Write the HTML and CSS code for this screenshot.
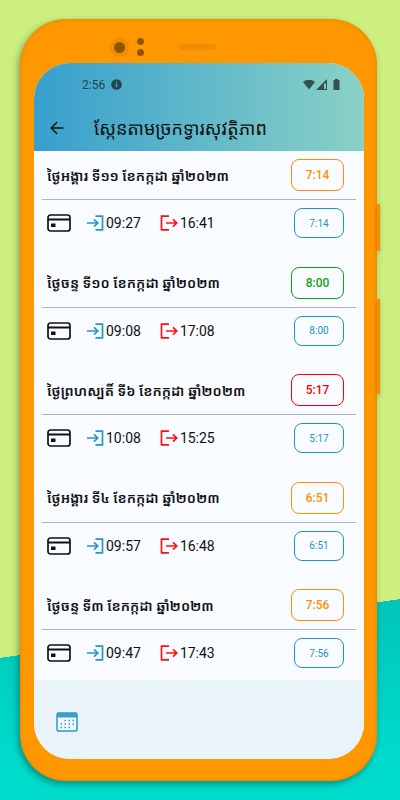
FILE: index.html
```
<!DOCTYPE html>
<html lang="km">

<head>
  <meta charset="utf-8">
  <meta name="viewport" content="width=device-width, initial-scale=1">
  <title>ស្កែនតាមច្រកទ្វារសុវត្ថិភាព</title>
  <link rel="stylesheet" href="styles.css">
</head>

<body>
  <!-- shared icons -->
  <svg class="icon-defs" aria-hidden="true">
    <symbol id="icon-card" viewBox="0 0 24 20">
      <rect x="1" y="2" width="22" height="16" rx="2.500" fill="none" stroke="#111" stroke-width="1.700" />
      <path d="M1 6.500h22" stroke="#111" stroke-width="2" />
      <rect x="4" y="10.500" width="4.500" height="3.500" rx="0.500" fill="#111" />
    </symbol>
    <symbol id="icon-in" viewBox="0 0 18 16">
      <path d="M9.500 1.200h7v13.600h-7M1 8h11M8 4.300L11.800 8L8 11.700" fill="none" stroke="currentColor" stroke-width="1.700" />
    </symbol>
    <symbol id="icon-out" viewBox="0 0 18 16">
      <path d="M9 1.200H1.500v13.600H9M6 8h11M13 4.300L16.800 8L13 11.700" fill="none" stroke="currentColor" stroke-width="1.700" />
    </symbol>
  </svg>

  <div class="phone">
    <div class="side-button power"></div>
    <div class="side-button volume"></div>
    <div class="phone-top">
      <span class="camera"></span>
      <span class="sensors"><i></i><i></i></span>
      <span class="speaker"></span>
    </div>

    <div class="screen">
      <header class="header">
        <div class="status-bar">
          <span>2:56</span>
          <svg width="11" height="11" viewBox="0 0 11 11" aria-hidden="true">
            <circle cx="5.500" cy="5.500" r="5.300" fill="#24424f" />
            <path d="M5.500 4.800v3.500M5.500 2.500v1.300" stroke="#57aeca" stroke-width="1.300" />
          </svg>
          <svg class="status-right" width="38" height="12" viewBox="0 0 38 12" fill="#34504f" aria-hidden="true">
            <path d="M0 3C3.500 0 8.500 0 12 3L6 10.500z" />
            <path d="M24 0v11H13z" />
            <path d="M21 4.500h2V10h-2z" fill="#83cbc5" />
            <path d="M30.500 1h1.500V0h3v1h1.500v10h-6z" />
          </svg>
        </div>
        <div class="title-bar">
          <button type="button" class="back" aria-label="Back">
            <svg width="14" height="14" viewBox="0 0 14 14" aria-hidden="true">
              <path d="M13.500 7H1.500M7.200 1L1.200 7l6 6" fill="none" stroke="#111" stroke-width="1.500" />
            </svg>
          </button>
          <h1>ស្កែនតាមច្រកទ្វារសុវត្ថិភាព</h1>
        </div>
      </header>

      <main class="list">
        <section class="day">
          <div class="day-head">
            <h2>ថ្ងៃអង្គារ ទី១១ ខែកក្កដា ឆ្នាំ២០២៣</h2>
            <span class="total orange">7:14</span>
          </div>
          <div class="day-row">
            <svg class="card"><use href="#icon-card" /></svg>
            <span class="time in"><svg><use href="#icon-in" /></svg>09:27</span>
            <span class="time out"><svg><use href="#icon-out" /></svg>16:41</span>
            <span class="hours">7:14</span>
          </div>
        </section>

        <section class="day">
          <div class="day-head">
            <h2>ថ្ងៃចន្ទ ទី១០ ខែកក្កដា ឆ្នាំ២០២៣</h2>
            <span class="total green">8:00</span>
          </div>
          <div class="day-row">
            <svg class="card"><use href="#icon-card" /></svg>
            <span class="time in"><svg><use href="#icon-in" /></svg>09:08</span>
            <span class="time out"><svg><use href="#icon-out" /></svg>17:08</span>
            <span class="hours">8:00</span>
          </div>
        </section>

        <section class="day">
          <div class="day-head">
            <h2>ថ្ងៃព្រហស្បតិ៍ ទី៦ ខែកក្កដា ឆ្នាំ២០២៣</h2>
            <span class="total red">5:17</span>
          </div>
          <div class="day-row">
            <svg class="card"><use href="#icon-card" /></svg>
            <span class="time in"><svg><use href="#icon-in" /></svg>10:08</span>
            <span class="time out"><svg><use href="#icon-out" /></svg>15:25</span>
            <span class="hours">5:17</span>
          </div>
        </section>

        <section class="day">
          <div class="day-head">
            <h2>ថ្ងៃអង្គារ ទី៤ ខែកក្កដា ឆ្នាំ២០២៣</h2>
            <span class="total orange">6:51</span>
          </div>
          <div class="day-row">
            <svg class="card"><use href="#icon-card" /></svg>
            <span class="time in"><svg><use href="#icon-in" /></svg>09:57</span>
            <span class="time out"><svg><use href="#icon-out" /></svg>16:48</span>
            <span class="hours">6:51</span>
          </div>
        </section>

        <section class="day">
          <div class="day-head">
            <h2>ថ្ងៃចន្ទ ទី៣ ខែកក្កដា ឆ្នាំ២០២៣</h2>
            <span class="total orange">7:56</span>
          </div>
          <div class="day-row">
            <svg class="card"><use href="#icon-card" /></svg>
            <span class="time in"><svg><use href="#icon-in" /></svg>09:47</span>
            <span class="time out"><svg><use href="#icon-out" /></svg>17:43</span>
            <span class="hours">7:56</span>
          </div>
        </section>
      </main>

      <footer class="footer">
        <button type="button" class="calendar" aria-label="Calendar">
          <svg width="22" height="20" viewBox="0 0 22 20" aria-hidden="true">
            <rect x="1" y="1" width="20" height="18" rx="1.500" fill="#f2f9fc" stroke="#2b97c4" stroke-width="1.500" />
            <path d="M1 1h20v4.500H1z" fill="#3a9fcc" />
            <path d="M8.500 8.500h10M4.500 12h14M4.500 15.500h10" stroke="#2b97c4" stroke-width="1.500" stroke-dasharray="1.500 2.500" />
          </svg>
        </button>
      </footer>
    </div>
  </div>
</body>

</html>
```

FILE: styles.css
```
* {
  box-sizing: border-box;
}

body {
  margin: 0;
  min-height: 100vh;
  padding: 19px 23px 19px 20px;
  display: flex;
  font-family: Roboto, "Noto Sans Khmer", "Khmer OS", sans-serif;
  color: #111;
  background: linear-gradient(to bottom right, #cdef80 50%, transparent 50%) 0 599px / 100% 59px no-repeat,
    linear-gradient(#cdef80, #cdef80) 0 0 / 100% 599px no-repeat,
    linear-gradient(#00c4b8 600px, #00dccc 760px);
}

.icon-defs {
  position: absolute;
  width: 0;
  height: 0;
}

.phone {
  position: relative;
  flex: 1;
  display: flex;
  flex-direction: column;
  padding: 0 13px 22px 14px;
  border-radius: 46px;
  background: #ff9800;
  box-shadow: -2px 3px 7px rgba(0, 0, 0, 0.35), inset 0 0 4px rgba(150, 80, 0, 0.3);
}

.side-button {
  position: absolute;
  left: 100%;
  width: 3px;
  background: #f88f00;
  box-shadow: 0 2px 4px rgba(0, 0, 0, 0.2);
}

.power {
  top: 185px;
  height: 47px;
}

.volume {
  top: 280px;
  height: 95px;
}

.phone-top {
  height: 44px;
  padding: 12px 0 0 76px;
  display: flex;
  align-items: center;
}

.camera {
  width: 19px;
  height: 19px;
  border: 4px solid #ee8e05;
  border-radius: 50%;
  background: #8f5500;
}

.sensors {
  display: grid;
  gap: 4px;
  margin-left: 8px;
}

.sensors i {
  width: 7px;
  height: 7px;
  border-radius: 50%;
  background: #8f5500;
}

.speaker {
  width: 37px;
  height: 6px;
  margin-left: 35px;
  border-radius: 3px;
  background: #ee8e05;
}

.screen {
  flex: 1;
  display: flex;
  flex-direction: column;
  overflow: hidden;
  border-radius: 36px;
  background: #f8fbff;
}

.header {
  height: 88px;
  background: linear-gradient(to right, #379fcd, #8ad1c6);
}

.status-bar {
  height: 43px;
  padding: 0 23px 0 48px;
  display: flex;
  align-items: center;
  gap: 6px;
  font-size: 12px;
  color: #24424f;
}

.status-right {
  margin-left: auto;
}

.title-bar {
  height: 44px;
  padding-left: 16px;
  display: flex;
  align-items: center;
  gap: 30px;
}

button {
  display: flex;
  padding: 0;
  border: 0;
  background: none;
  cursor: pointer;
}

h1 {
  margin: 0;
  font-size: 18px;
  font-weight: 400;
  white-space: nowrap;
}

.list {
  flex: 1;
  display: flex;
  flex-direction: column;
  justify-content: space-between;
  padding: 0 8px;
}

.day-head {
  height: 49px;
  padding: 0 12px 0 5px;
  display: flex;
  align-items: center;
  justify-content: space-between;
  border-bottom: 1px solid #b0b4b8;
}

h2 {
  margin: 0;
  font-size: 14px;
  font-weight: 600;
  white-space: nowrap;
}

.total,
.hours {
  display: flex;
  align-items: center;
  justify-content: center;
  border: 1px solid currentColor;
  border-radius: 8px;
}

.total {
  width: 53px;
  height: 32px;
  font-size: 12px;
  font-weight: 500;
}

.hours {
  width: 50px;
  height: 30px;
  margin-left: auto;
  font-size: 10px;
  color: #2494c5;
}

.orange {
  color: #ff8f00;
}

.green {
  color: #16a01c;
}

.red {
  color: #f00;
}

.day-row {
  height: 50px;
  padding: 0 12px 4px 5px;
  display: flex;
  align-items: center;
}

.card {
  width: 24px;
  height: 20px;
}

.time {
  display: flex;
  align-items: center;
  gap: 2px;
  font-size: 14px;
}

.time svg {
  width: 18px;
  height: 16px;
}

.in {
  margin-left: 15px;
}

.out {
  margin-left: 19px;
}

.in svg {
  color: #2397cb;
}

.out svg {
  color: #f11;
}

.footer {
  height: 79px;
  padding: 32px 22px 0;
  background: #e8f4fa;
}
```
